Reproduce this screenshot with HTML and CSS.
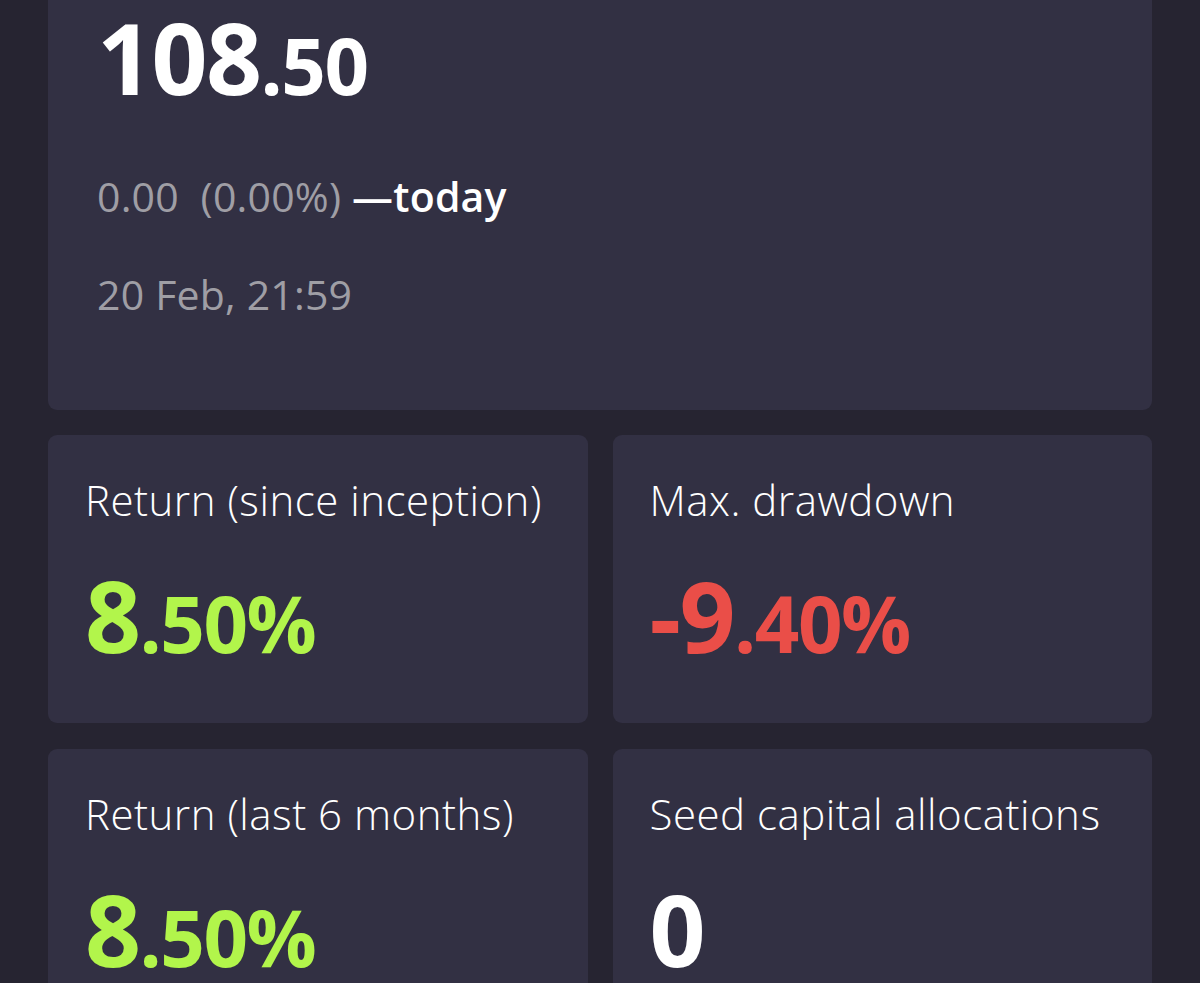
FILE: index.html
```html
<!DOCTYPE html>
<html lang="en">
<head>
<meta charset="utf-8">
<title>Fund overview</title>
<link rel="stylesheet" href="styles.css">
</head>
<body>
<main class="page">
  <section class="card hero">
    <div class="price"><span class="big">108</span><span class="small">.50</span></div>
    <div class="change"><span class="muted">0.00&nbsp; (0.00%)</span> <span class="today">—today</span></div>
    <div class="time muted">20 Feb, 21:59</div>
  </section>
  <section class="grid">
    <div class="card stat">
      <div class="label">Return (since inception)</div>
      <div class="value green"><span class="big">8</span><span class="small">.50%</span></div>
    </div>
    <div class="card stat">
      <div class="label">Max. drawdown</div>
      <div class="value red"><span class="big">-9</span><span class="small">.40%</span></div>
    </div>
    <div class="card stat">
      <div class="label">Return (last 6 months)</div>
      <div class="value green"><span class="big">8</span><span class="small">.50%</span></div>
    </div>
    <div class="card stat">
      <div class="label">Seed capital allocations</div>
      <div class="value white"><span class="big">0</span></div>
    </div>
  </section>
</main>
</body>
</html>
```
FILE: styles.css
```css
html, body {
  margin: 0;
  padding: 0;
  background: #262431;
  font-family: "Open Sans", "Noto Sans", "DejaVu Sans", sans-serif;
  color: #ffffff;
  overflow: hidden;
}

.page {
  margin-top: -20px;
  padding: 0 48px;
  display: flex;
  flex-direction: column;
  gap: 25px;
}

.card {
  background: #323043;
  border-radius: 9px;
}

.hero {
  padding: 28px 49px 95px;
}

.price {
  font-weight: 700;
  line-height: 1;
  letter-spacing: -1.5px;
}

.big {
  font-size: 98px;
}

.small {
  font-size: 78px;
}

.change {
  margin-top: 70px;
  font-size: 41px;
  line-height: 1;
  letter-spacing: 0.2px;
}

.muted {
  color: #9f9ea5;
  font-weight: 400;
}

.today {
  color: #ffffff;
  font-weight: 600;
}

.time {
  margin-top: 57px;
  font-size: 41px;
  line-height: 1;
  letter-spacing: 0.2px;
}

.grid {
  display: grid;
  grid-template-columns: 1fr 1fr;
  gap: 26px 25px;
}

.stat {
  height: 288px;
  box-sizing: border-box;
  padding: 44px 37px 0;
}

.label {
  font-size: 42px;
  font-weight: 300;
  line-height: 1;
  letter-spacing: 0.5px;
  color: #ffffff;
  white-space: nowrap;
}

.value {
  margin-top: 45px;
  font-weight: 700;
  line-height: 1;
  letter-spacing: -1.5px;
}

.green { color: #b2f54b; }
.red { color: #ea4e48; }
.white { color: #ffffff; }
```
